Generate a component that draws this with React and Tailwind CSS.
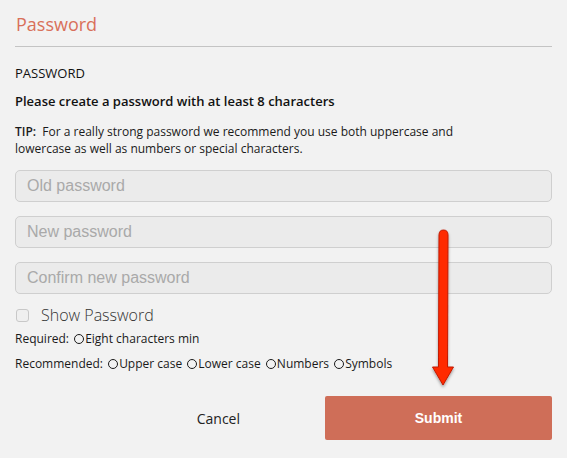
import { useState } from "react"

const sans = { fontFamily: '"Open Sans", "Liberation Sans", sans-serif' }

function Dot() {
  return <span className="ml-[2px] mr-px inline-block size-[10px] translate-y-[1px] rounded-full border-[1.8px] border-[#1a1a1a]" />
}

export default function App() {
  const [show, setShow] = useState(false)
  return (
    <div className="relative h-[458px] w-[567px] bg-[#f2f2f2] text-[#1a1a1a]" style={sans}>
      <div className="px-[15px] pt-[11px]">
        <h2 className="pl-px text-[18px] leading-[26px] text-[#d9705a]">Password</h2>
        <div className="mt-[9px] h-px w-[537px] bg-[#c4c4c4]" />

        <p className="mt-[17px] text-[13px] leading-[18px] text-[#111]">PASSWORD</p>
        <p className="mt-[10px] text-[13px] font-semibold leading-[18px] text-[#111]">Please create a password with at least 8 characters</p>
        <p className="mt-[13px] max-w-[455px] text-[12px] leading-[17px]">
          <span className="font-semibold">TIP:</span>&nbsp; For a really strong password we recommend you use both uppercase and lowercase as well as numbers or special characters.
        </p>

        <div className="mt-[13px] flex w-[537px] flex-col gap-[14px]">
          {["Old password", "New password", "Confirm new password"].map(p => (
            <input
              key={p}
              type={show ? "text" : "password"}
              placeholder={p}
              className="h-[32px] rounded-[5px] border border-[#cfcfcf] bg-[#ebebeb] px-[11px] text-[16px] placeholder:text-[#a9a9a9] outline-none"
              style={{ fontFamily: '"Liberation Sans", Arial, sans-serif' }}
            />
          ))}
        </div>

        <label className="mt-[10px] flex items-center gap-[12px] pl-px">
          <input type="checkbox" checked={show} onChange={e => setShow(e.target.checked)} className="size-[13px] appearance-none rounded-[3px] border border-[#c8c8c8] bg-[#efefef]" />
          <span className="text-[16px] font-light leading-[22px] text-[#333]">Show Password</span>
        </label>

        <p className="mt-[5px] text-[12px] leading-[16px]">Required: <Dot />Eight characters min</p>
        <p className="mt-[9px] text-[12px] leading-[16px]">
          Recommended: <Dot />Upper case <Dot />Lower case <Dot />Numbers <Dot />Symbols
        </p>

        <div className="mt-[24px] flex items-center justify-end">
          <button className="mr-[85px] text-[14px] text-[#222]">Cancel</button>
          <button className="h-[44px] w-[227px] rounded-[2px] bg-[#cf6e58] text-[14px] font-bold text-white" style={{ fontFamily: '"Liberation Sans", Arial, sans-serif' }}>Submit</button>
        </div>
      </div>

      <svg className="pointer-events-none absolute left-[425px] top-[225px]" width="40" height="170" viewBox="0 0 40 170">
        <defs>
          <filter id="sh" x="-50%" y="-20%" width="200%" height="140%">
            <feDropShadow dx="0" dy="2" stdDeviation="1.5" floodColor="#000" floodOpacity="0.35" />
          </filter>
        </defs>
        <g filter="url(#sh)">
          <path d="M14 10 Q14 5 18.5 5 Q23 5 23 10 L22.5 142 L28.5 142 L18 160 L7.5 142 L13.5 142 Z" fill="#ff2a00" stroke="#c21a00" strokeWidth="1" strokeLinejoin="round" />
        </g>
      </svg>
    </div>
  )
}
